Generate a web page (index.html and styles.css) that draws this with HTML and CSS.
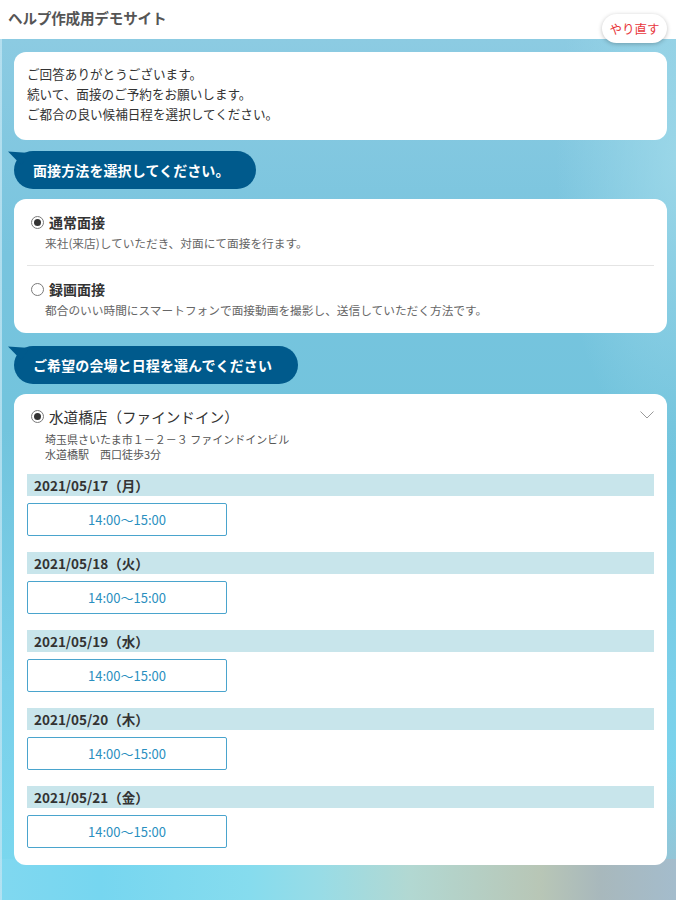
FILE: index.html
```html
<!DOCTYPE html>
<html lang="ja">
<head>
<meta charset="utf-8">
<title>ヘルプ作成用デモサイト</title>
<link rel="stylesheet" href="styles.css">
</head>
<body>
<header class="header">
  <h1 class="site-title">ヘルプ作成用デモサイト</h1>
  <button class="redo">やり直す</button>
</header>
<main class="main">
  <section class="card intro">
    <p>ご回答ありがとうございます。</p>
    <p>続いて、面接のご予約をお願いします。</p>
    <p>ご都合の良い候補日程を選択してください。</p>
  </section>

  <div class="bubble"><span>面接方法を選択してください。</span></div>

  <section class="card methods">
    <div class="option">
      <div class="option-head"><span class="radio checked"></span><span class="option-title">通常面接</span></div>
      <p class="option-desc">来社(来店)していただき、対面にて面接を行ます。</p>
    </div>
    <div class="option">
      <div class="option-head"><span class="radio"></span><span class="option-title">録画面接</span></div>
      <p class="option-desc">都合のいい時間にスマートフォンで面接動画を撮影し、送信していただく方法です。</p>
    </div>
  </section>

  <div class="bubble"><span>ご希望の会場と日程を選んでください</span></div>

  <section class="card venue">
    <div class="venue-head">
      <span class="radio checked"></span>
      <span class="venue-name">水道橋店（ファインドイン）</span>
      <svg class="chevron" width="14" height="8" viewBox="0 0 14 8"><path d="M0.5 0.5 L7 7 L13.5 0.5" fill="none" stroke="#9a9a9a" stroke-width="1"/></svg>
    </div>
    <div class="venue-addr">
      <p>埼玉県さいたま市１－２－３ ファインドインビル</p>
      <p>水道橋駅　西口徒歩3分</p>
    </div>

    <div class="day">
      <div class="date">2021/05/17（月）</div>
      <button class="slot">14:00〜15:00</button>
    </div>
    <div class="day">
      <div class="date">2021/05/18（火）</div>
      <button class="slot">14:00〜15:00</button>
    </div>
    <div class="day">
      <div class="date">2021/05/19（水）</div>
      <button class="slot">14:00〜15:00</button>
    </div>
    <div class="day">
      <div class="date">2021/05/20（木）</div>
      <button class="slot">14:00〜15:00</button>
    </div>
    <div class="day">
      <div class="date">2021/05/21（金）</div>
      <button class="slot">14:00〜15:00</button>
    </div>
  </section>
</main>
</body>
</html>
```

FILE: styles.css
```css
* { box-sizing: border-box; }
html, body { margin: 0; padding: 0; }
body {
  font-family: "Noto Sans CJK JP", "Noto Sans", sans-serif;
  color: #333;
  background: #fff;
  width: 676px;
}
p { margin: 0; }

.header {
  height: 39px;
  background: #fff;
  position: relative;
  padding: 0 0 0 8px;
}
.site-title {
  margin: 0;
  font-size: 14.6px;
  font-weight: 700;
  color: #555;
  line-height: 36px;
  letter-spacing: -0.2px;
}
.redo {
  position: absolute;
  top: 14px;
  right: 9px;
  width: 65px;
  height: 29px;
  border: none;
  border-radius: 15px;
  background: #fff;
  box-shadow: 0 1px 4px rgba(0,0,0,0.25);
  color: #e8383d;
  font-family: "Noto Sans CJK JP", sans-serif;
  font-size: 12.5px;
  padding: 0;
  z-index: 2;
}

.main {
  min-height: 861px;
  padding: 13px 9px 36px 14px;
  display: flex;
  flex-direction: column;
  background:
    linear-gradient(to right, rgba(190,228,242,0.8) 0, rgba(190,228,242,0.8) 2px, transparent 2px),
    linear-gradient(to right, #80d8f0 0px, #76d6f0 100px, #86dcee 250px, #98dce6 320px, #b2d8d2 410px, #b8c6b6 540px, #a8b8bc 600px, #a4bccc 676px) left bottom / 100% 42px no-repeat,
    radial-gradient(ellipse 120px 140px at 690px 860px, rgba(164,186,200,0.9) 0%, transparent 100%),
    radial-gradient(ellipse 120px 300px at 676px 120px, rgba(160,218,234,0.8) 0%, transparent 100%),
    linear-gradient(180deg, #8ccbe2 0%, #78c4de 25%, #72c4dd 45%, #7bd0ea 75%, #7ad8ef 100%);
}

.card {
  background: #fff;
  border-radius: 12px;
}

.intro {
  padding: 12px 13px 16px;
  font-size: 12.6px;
  line-height: 20px;
  color: #333;
}

.bubble {
  position: relative;
  align-self: flex-start;
  margin: 11px 0 10px;
  height: 38px;
  padding: 0 26px 0 19px;
  background: #005a8c;
  border-radius: 19px;
  color: #fff;
  font-size: 14px;
  font-weight: 700;
  line-height: 38px;
  letter-spacing: 0.1px;
}
.bubble::before {
  content: "";
  position: absolute;
  left: -6px;
  top: 0;
  width: 22px;
  height: 14px;
  background: #005a8c;
  clip-path: polygon(0 3%, 100% 15%, 60% 100%);
}
.methods + .bubble { margin-top: 13px; }

.methods {
  padding: 0 13px 1px;
}
.option {
  padding: 13px 0 13px 4px;
}
.option + .option {
  border-top: 1px solid #e4e4e4;
}
.option-head {
  display: flex;
  align-items: center;
  height: 20px;
}
.option-title {
  font-size: 14px;
  font-weight: 700;
  color: #333;
  margin-left: 5px;
}
.option-desc {
  margin-top: 2px;
  padding-left: 14px;
  font-size: 11.7px;
  line-height: 18px;
  color: #666;
}

.radio {
  display: inline-block;
  width: 13px;
  height: 13px;
  border-radius: 50%;
  border: 1px solid #7a7a7a;
  background: #fff;
  flex: none;
  position: relative;
}
.radio.checked::after {
  content: "";
  position: absolute;
  left: 2px;
  top: 2px;
  width: 7px;
  height: 7px;
  border-radius: 50%;
  background: #333;
}

.venue {
  padding: 11px 13px 17px;
}
.venue-head {
  display: flex;
  align-items: center;
  height: 22px;
  padding-left: 4px;
}
.venue-name {
  margin-left: 5px;
  font-size: 14.6px;
  color: #333;
  flex: 1;
}
.chevron {
  margin-top: -3px;
}
.venue-addr {
  margin-top: 5px;
  padding-left: 18px;
  font-size: 11px;
  line-height: 15px;
  color: #555;
}

.day {
  display: flex;
  flex-direction: column;
  align-items: flex-start;
}
.venue-addr + .day { margin-top: 12px; }
.day + .day { margin-top: 16px; }
.date {
  align-self: stretch;
  height: 22px;
  padding-left: 7px;
  background: #c8e5eb;
  font-size: 13.5px;
  font-weight: 700;
  line-height: 22px;
  color: #333;
}
.slot {
  margin-top: 7px;
  width: 200px;
  height: 33px;
  border: 1px solid #4aa4cd;
  border-radius: 2px;
  background: #fff;
  color: #2a8fc0;
  font-family: "Noto Sans CJK JP", sans-serif;
  font-size: 13px;
  padding: 0;
}
```
